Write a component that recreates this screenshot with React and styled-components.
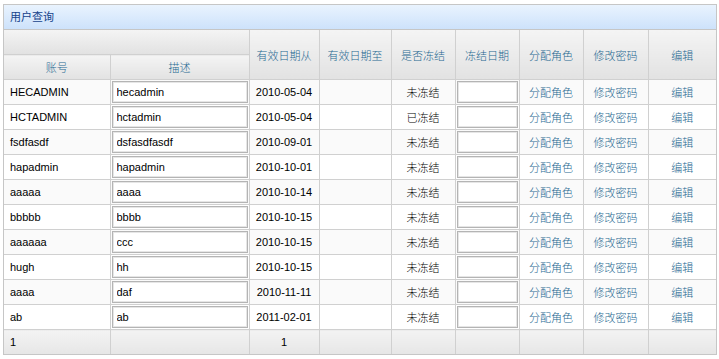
import React from 'react';
import styled, { createGlobalStyle } from 'styled-components';

const GlobalStyle = createGlobalStyle`
  body {
    margin: 0;
    background: #fff;
    font-family: "Liberation Sans", "Noto Sans CJK SC", sans-serif;
    font-size: 11px;
  }
`;

const Panel = styled.div`
  margin: 4px 0 0 3px;
  width: 712px;
  border: 1px solid #c6c6c6;
`;

const TitleBar = styled.div`
  height: 24px;
  line-height: 24px;
  padding-left: 6px;
  color: #15428b;
  background: linear-gradient(#e9f3fe, #cde2fb);
  border-bottom: 1px solid #c6c6c6;
`;

const Table = styled.table`
  width: 712px;
  border-collapse: collapse;
  table-layout: fixed;
`;

const HeadCell = styled.th`
  height: 24px;
  padding: 0;
  border: 1px solid #d0d0d0;
  border-top: none;
  font-weight: 300;
  color: #1e6891;
  text-align: center;
  background: linear-gradient(#f4f4f4, #e2e2e2);
  &:first-child { border-left: none; }
  &:last-child { border-right: none; }
`;

const Row = styled.tr`
  background: ${p => (p.$striped ? '#fafafa' : '#fff')};
`;

const Cell = styled.td`
  height: 24px;
  padding: 0 ${p => (p.$left ? '6px' : '0')};
  border: 1px solid #d0d0d0;
  color: #000;
  font-weight: 300;
  text-align: ${p => (p.$left ? 'left' : 'center')};
  white-space: nowrap;
  overflow: hidden;
  &:first-child { border-left: none; }
  &:last-child { border-right: none; }
`;

const InputCell = styled.td`
  height: 24px;
  padding: 0 1px;
  border: 1px solid #d0d0d0;
`;

const Field = styled.input`
  display: block;
  box-sizing: border-box;
  width: 100%;
  height: 22px;
  margin: 0;
  padding: 0 4px;
  border: 1px solid #b4b4b4;
  box-shadow: inset 0 0 0 1px #e6e6e6;
  background: #fff;
  font: inherit;
  color: #000;
  outline: none;
`;

const Link = styled.a`
  color: #1e6891;
  text-decoration: none;
  cursor: pointer;
`;

const FootRow = styled.tr`
  background: linear-gradient(#f3f3f3, #e6e6e6);
`;

const FootCell = styled.td`
  height: 24px;
  padding: 0 ${p => (p.$left ? '6px' : '0')};
  border: 1px solid #d0d0d0;
  border-bottom: none;
  background: linear-gradient(#f3f3f3, #e6e6e6);
  text-align: ${p => (p.$left ? 'left' : 'center')};
  color: #000;
  &:first-child { border-left: none; }
  &:last-child { border-right: none; }
`;

const users = [
  { code: 'HECADMIN', desc: 'hecadmin', from: '2010-05-04', frozen: '未冻结' },
  { code: 'HCTADMIN', desc: 'hctadmin', from: '2010-05-04', frozen: '已冻结' },
  { code: 'fsdfasdf', desc: 'dsfasdfasdf', from: '2010-09-01', frozen: '未冻结' },
  { code: 'hapadmin', desc: 'hapadmin', from: '2010-10-01', frozen: '未冻结' },
  { code: 'aaaaa', desc: 'aaaa', from: '2010-10-14', frozen: '未冻结' },
  { code: 'bbbbb', desc: 'bbbb', from: '2010-10-15', frozen: '未冻结' },
  { code: 'aaaaaa', desc: 'ccc', from: '2010-10-15', frozen: '未冻结' },
  { code: 'hugh', desc: 'hh', from: '2010-10-15', frozen: '未冻结' },
  { code: 'aaaa', desc: 'daf', from: '2010-11-11', frozen: '未冻结' },
  { code: 'ab', desc: 'ab', from: '2011-02-01', frozen: '未冻结' },
];

const widths = [106, 139, 70, 72, 64, 64, 64, 65, 68];

const App = () => (
  <>
    <GlobalStyle />
    <Panel>
      <TitleBar>用户查询</TitleBar>
      <Table>
        <colgroup>
          {widths.map((w, i) => <col key={i} style={{ width: w }} />)}
        </colgroup>
        <thead>
          <tr>
            <HeadCell colSpan={2} />
            <HeadCell rowSpan={2}>有效日期从</HeadCell>
            <HeadCell rowSpan={2}>有效日期至</HeadCell>
            <HeadCell rowSpan={2}>是否冻结</HeadCell>
            <HeadCell rowSpan={2}>冻结日期</HeadCell>
            <HeadCell rowSpan={2}>分配角色</HeadCell>
            <HeadCell rowSpan={2}>修改密码</HeadCell>
            <HeadCell rowSpan={2}>编辑</HeadCell>
          </tr>
          <tr>
            <HeadCell>账号</HeadCell>
            <HeadCell>描述</HeadCell>
          </tr>
        </thead>
        <tbody>
          {users.map((u, i) => (
            <Row key={i} $striped={i % 2 === 0}>
              <Cell $left>{u.code}</Cell>
              <InputCell><Field defaultValue={u.desc} /></InputCell>
              <Cell>{u.from}</Cell>
              <Cell />
              <Cell>{u.frozen}</Cell>
              <InputCell><Field /></InputCell>
              <Cell><Link>分配角色</Link></Cell>
              <Cell><Link>修改密码</Link></Cell>
              <Cell><Link>编辑</Link></Cell>
            </Row>
          ))}
          <FootRow>
            <FootCell $left>1</FootCell>
            <FootCell />
            <FootCell>1</FootCell>
            <FootCell />
            <FootCell />
            <FootCell />
            <FootCell />
            <FootCell />
            <FootCell />
          </FootRow>
        </tbody>
      </Table>
    </Panel>
  </>
);

export default App;
